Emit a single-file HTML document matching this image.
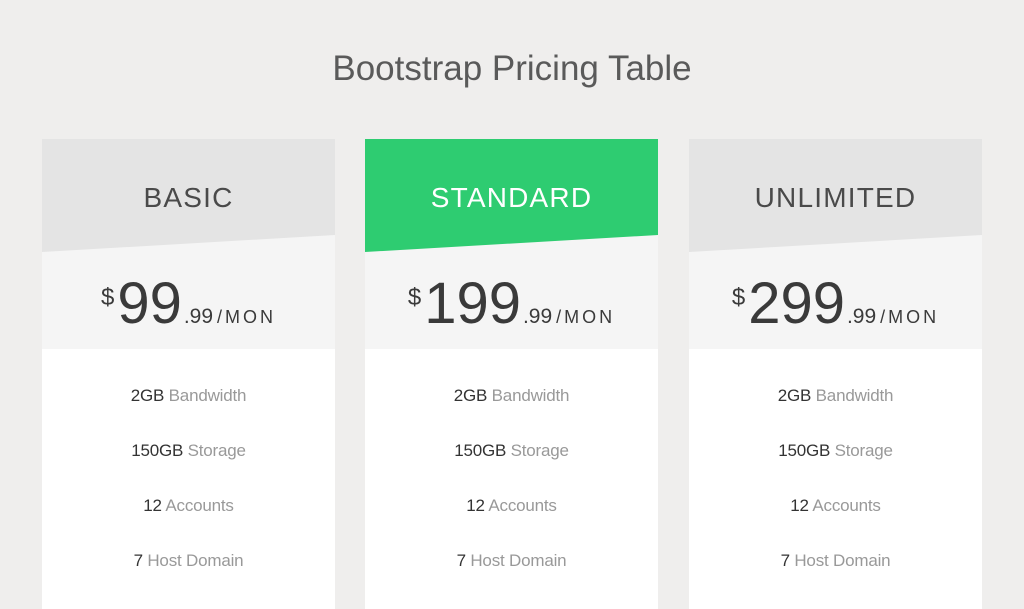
<!DOCTYPE html>
<html><head><style>
body{margin:0;width:1024px;height:600px;background:#efeeed;font-family:"Liberation Sans",sans-serif;overflow:hidden;position:relative}
h1{position:absolute;top:47px;left:0;width:1024px;text-align:center;margin:0;font-weight:normal;font-size:35px;color:#5a5a5a;line-height:44px}
.card{position:absolute;top:139px;width:293px;height:470px;background:#fff}
.pr{position:absolute;top:0;left:0;width:293px;height:210px;background:#f5f5f5}
.hd{position:absolute;top:0;left:0;width:293px;height:113px;background:#e4e4e4;clip-path:polygon(0 0,100% 0,100% 96px,0 113px)}
.hd.g{background:#2ecc71}
.name{position:absolute;top:41px;left:0;width:293px;text-align:center;font-size:28px;letter-spacing:1.2px;color:#4a4a4a;line-height:36px}
.g .name{color:#fff}
.price{position:absolute;top:124px;left:0;width:293px;text-align:center;color:#3a3a3a;white-space:nowrap;line-height:70px}
.price .d{font-size:24px;vertical-align:18px}
.price .n{font-size:58px;margin-left:3px;margin-right:2px}
.price .c{font-size:21px;margin-right:4px}
.price .m{font-size:18px;letter-spacing:3px}
.f{position:absolute;left:0;width:293px;text-align:center;font-size:17px;color:#333;line-height:22px;letter-spacing:-0.2px}
.f span{color:#999}
</style></head><body>
<h1>Bootstrap Pricing Table</h1>

<div class="card" style="left:42px"><div class="pr"></div><div class="hd"><div class="name">BASIC</div></div>
<div class="price"><span class="d">$</span><span class="n">99</span><span class="c">.99</span><span class="m">/MON</span></div>
<div class="f" style="top:246px">2GB <span>Bandwidth</span></div>
<div class="f" style="top:301px">150GB <span>Storage</span></div>
<div class="f" style="top:356px">12 <span>Accounts</span></div>
<div class="f" style="top:411px">7 <span>Host Domain</span></div></div>

<div class="card" style="left:365px"><div class="pr"></div><div class="hd g"><div class="name">STANDARD</div></div>
<div class="price"><span class="d">$</span><span class="n">199</span><span class="c">.99</span><span class="m">/MON</span></div>
<div class="f" style="top:246px">2GB <span>Bandwidth</span></div>
<div class="f" style="top:301px">150GB <span>Storage</span></div>
<div class="f" style="top:356px">12 <span>Accounts</span></div>
<div class="f" style="top:411px">7 <span>Host Domain</span></div></div>

<div class="card" style="left:689px"><div class="pr"></div><div class="hd"><div class="name">UNLIMITED</div></div>
<div class="price"><span class="d">$</span><span class="n">299</span><span class="c">.99</span><span class="m">/MON</span></div>
<div class="f" style="top:246px">2GB <span>Bandwidth</span></div>
<div class="f" style="top:301px">150GB <span>Storage</span></div>
<div class="f" style="top:356px">12 <span>Accounts</span></div>
<div class="f" style="top:411px">7 <span>Host Domain</span></div></div>
</body></html>
